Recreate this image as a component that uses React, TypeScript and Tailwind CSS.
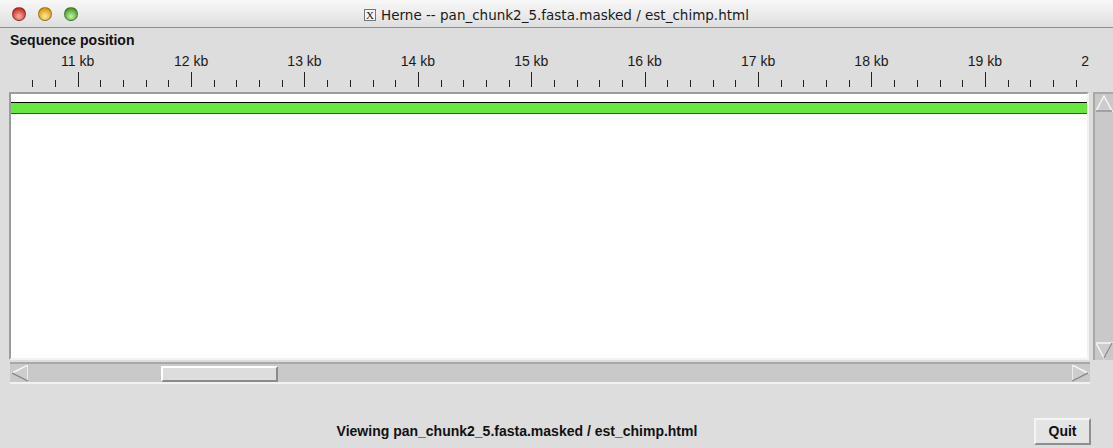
const KB0 = 77.7
const KB = 113.4

const TrafficLight = ({ from, to }: { from: string; to: string }) => (
  <span
    className="block size-[14px] rounded-full border border-black/30"
    style={{ background: `radial-gradient(circle at 50% 70%, ${to} 0%, ${from} 75%)` }}
  />
)

const Ruler = () => {
  const ticks = []
  for (let i = 0; ; i++) {
    const x = Math.round(32.3 + (i * KB) / 5) + 0.5
    if (x > 1080) break
    const major = (i - 2) % 5 === 0
    ticks.push(<line key={i} x1={x} x2={x} y1={major ? 24 : 32} y2={39} stroke="#222" />)
  }
  const labels = []
  for (let n = 11; n <= 20; n++) {
    labels.push(
      <text key={n} x={KB0 + (n - 11) * KB} y={18} textAnchor="middle" fontSize={14} fill="#1a1a1a">
        {n} kb
      </text>
    )
  }
  // the ruler stops at the canvas edge, so the last label gets cut
  return (
    <svg width={1089} height={43} className="block overflow-hidden" shapeRendering="crispEdges" fontFamily="'Liberation Sans', Arial, sans-serif">
      {labels}
      {ticks}
    </svg>
  )
}

// hollow Tk-style scroll arrow: light upper edges, dark lower edge
const Arrow = ({ dir }: { dir: "up" | "down" | "left" | "right" }) => {
  const shapes = {
    up: { pts: "8,1 16,16 0,16", dark: "M16 16 L0 16" },
    down: { pts: "0,1 16,1 8,16", dark: "M16 1 L8 16" },
    left: { pts: "1,8 17,0 17,16", dark: "M1 8 L17 16" },
    right: { pts: "16,8 0,0 0,16", dark: "M16 8 L0 16" },
  }[dir]
  return (
    <svg width={17} height={17} className="block shrink-0">
      <polygon points={shapes.pts} fill="#cdcdcd" stroke="#f6f6f6" strokeWidth={1.5} />
      <path d={shapes.dark} stroke="#8a8a8a" strokeWidth={1.5} />
    </svg>
  )
}

export default function App() {
  return (
    <div className="flex h-[448px] w-[1113px] flex-col overflow-hidden bg-[#dddddd] font-['Liberation_Sans',Arial,sans-serif] text-[#111]">
      {/* title bar */}
      <div className="relative flex h-[28px] shrink-0 items-center border-b border-[#8e8e8e] bg-gradient-to-b from-[#f7f7f7] via-[#ececec] to-[#dedede]">
        <div className="absolute left-[12px] top-[7px] flex gap-[12px]">
          <TrafficLight from="#c9302a" to="#ffb1a8" />
          <TrafficLight from="#d89a10" to="#ffe9a0" />
          <TrafficLight from="#4f9a2a" to="#c4f5a6" />
        </div>
        <div className="mx-auto flex items-center gap-[5px] pt-[3px] font-['DejaVu_Sans',sans-serif] text-[13.5px] text-[#1a1a1a]">
          <span className="flex h-[12px] w-[12px] items-center justify-center border border-[#777] bg-[#f4f4f4] font-['Liberation_Serif',serif] text-[11px] leading-none">
            X
          </span>
          <span>Herne -- pan_chunk2_5.fasta.masked / est_chimp.html</span>
        </div>
      </div>

      <div className="mt-[4px] h-[16px] pl-[10px] text-[14px] font-bold leading-[16px]">Sequence position</div>

      <Ruler />

      {/* canvas + vertical scrollbar */}
      <div className="mt-[1px] flex h-[268px] shrink-0 gap-[4px] pl-[9px]">
        <div className="w-[1082px] border-2 border-t-[#9c9c9c] border-r-[#f2f2f2] border-b-[#f2f2f2] border-l-[#9c9c9c] bg-white">
          <div className="mt-[8px] h-[12px] border-t border-b border-t-black border-b-[#2f5f1c] bg-[#68e83e]" />
        </div>
        <div className="flex w-[20px] flex-col justify-between border-l-2 border-t-2 border-[#a8a8a8] bg-[#c9c9c9] py-[1px] pl-[1px]">
          <Arrow dir="up" />
          <Arrow dir="down" />
        </div>
      </div>

      {/* horizontal scrollbar */}
      <div className="mt-[2px] ml-[10px] flex h-[22px] w-[1080px] shrink-0 items-center justify-between border-t-2 border-b-2 border-t-[#a8a8a8] border-b-[#f2f2f2] bg-[#c9c9c9] px-[1px]">
        <Arrow dir="left" />
        <Arrow dir="right" />
      </div>
      <div className="pointer-events-none relative">
        <div className="absolute -top-[18px] left-[161px] h-[16px] w-[117px] border-2 border-t-white border-l-white border-r-[#8a8a8a] border-b-[#8a8a8a] bg-[#dddddd]" />
      </div>

      {/* status row */}
      <div className="mt-[34px] flex h-[27px] items-center pr-[22px]">
        <div className="flex-1 text-center text-[14px] font-bold">Viewing pan_chunk2_5.fasta.masked / est_chimp.html</div>
        <button className="h-[27px] w-[57px] border-2 border-t-[#f4f4f4] border-l-[#f4f4f4] border-r-[#8e8e8e] border-b-[#8e8e8e] bg-[#e4e4e4] text-[14px] font-bold">
          Quit
        </button>
      </div>
    </div>
  )
}
